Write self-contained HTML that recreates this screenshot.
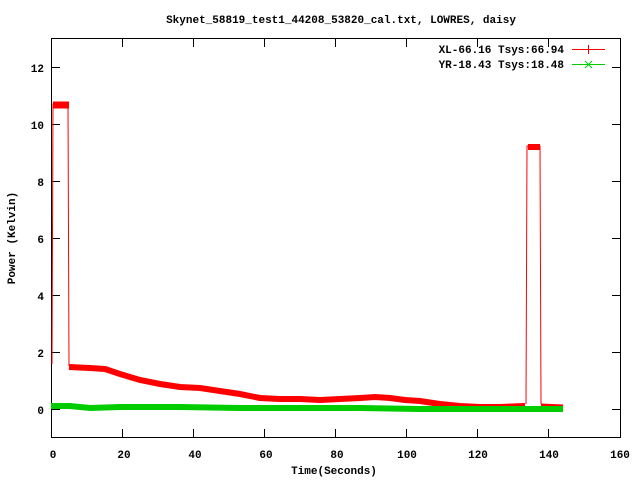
<!DOCTYPE html>
<html><head><style>body{margin:0;background:#fff}svg{display:block}text{font-family:"Liberation Mono",monospace;font-weight:bold;font-size:11px;fill:#000}</style></head><body>
<svg width="640" height="480" xmlns="http://www.w3.org/2000/svg">
<rect x="51.5" y="38.5" width="569" height="399" fill="none" stroke="#000"/>
<g stroke="#000">
<line x1="52" y1="67.5" x2="60" y2="67.5"/><line x1="612" y1="67.5" x2="620" y2="67.5"/>
<line x1="52" y1="124.5" x2="60" y2="124.5"/><line x1="612" y1="124.5" x2="620" y2="124.5"/>
<line x1="52" y1="181.5" x2="60" y2="181.5"/><line x1="612" y1="181.5" x2="620" y2="181.5"/>
<line x1="52" y1="238.5" x2="60" y2="238.5"/><line x1="612" y1="238.5" x2="620" y2="238.5"/>
<line x1="52" y1="295.5" x2="60" y2="295.5"/><line x1="612" y1="295.5" x2="620" y2="295.5"/>
<line x1="52" y1="352.5" x2="60" y2="352.5"/><line x1="612" y1="352.5" x2="620" y2="352.5"/>
<line x1="52" y1="409.5" x2="60" y2="409.5"/><line x1="612" y1="409.5" x2="620" y2="409.5"/>
<line x1="122.5" y1="437" x2="122.5" y2="429"/><line x1="122.5" y1="39" x2="122.5" y2="47"/>
<line x1="193.5" y1="437" x2="193.5" y2="429"/><line x1="193.5" y1="39" x2="193.5" y2="47"/>
<line x1="264.5" y1="437" x2="264.5" y2="429"/><line x1="264.5" y1="39" x2="264.5" y2="47"/>
<line x1="335.5" y1="437" x2="335.5" y2="429"/><line x1="335.5" y1="39" x2="335.5" y2="47"/>
<line x1="406.5" y1="437" x2="406.5" y2="429"/><line x1="406.5" y1="39" x2="406.5" y2="47"/>
<line x1="477.5" y1="437" x2="477.5" y2="429"/><line x1="477.5" y1="39" x2="477.5" y2="47"/>
<line x1="548.5" y1="437" x2="548.5" y2="429"/><line x1="548.5" y1="39" x2="548.5" y2="47"/>
</g>
<g text-anchor="end">
<text x="44" y="72">12</text><text x="44" y="129">10</text><text x="44" y="186">8</text><text x="44" y="243">6</text><text x="44" y="300">4</text><text x="44" y="357">2</text><text x="44" y="414">0</text>
</g>
<g text-anchor="middle">
<text x="53" y="458">0</text><text x="124" y="458">20</text><text x="195" y="458">40</text><text x="266" y="458">60</text><text x="337" y="458">80</text><text x="407" y="458">100</text><text x="478" y="458">120</text><text x="549" y="458">140</text><text x="620" y="458">160</text>
<text x="334" y="474">Time(Seconds)</text>
<text x="341" y="23">Skynet_58819_test1_44208_53820_cal.txt, LOWRES, daisy</text>
<text transform="translate(15,238) rotate(-90)">Power (Kelvin)</text>
</g>
<g text-anchor="end"><text x="564" y="53">XL-66.16 Tsys:66.94</text><text x="564" y="68">YR-18.43 Tsys:18.48</text></g>
<line x1="572" y1="49.5" x2="605" y2="49.5" stroke="#f00"/><line x1="588.5" y1="45" x2="588.5" y2="54" stroke="#f00"/>
<line x1="572" y1="64.5" x2="605" y2="64.5" stroke="#0c0"/><path d="M585 61l7 7M592 61l-7 7" stroke="#0c0"/>
<polyline fill="none" stroke="#f00" stroke-width="1" points="52,364 53,104 54,104 68,104 69,366"/>
<polyline fill="none" stroke="#f00" stroke-width="1" points="526,404 527,146 540,146 541,404"/>
<polyline fill="none" stroke="#f00" stroke-width="7" points="53,105 69,105"/>
<polyline fill="none" stroke="#f00" stroke-width="6" points="69,367 90,368 105,369 120,374 140,380 160,384 180,387 200,388 220,391 240,394 260,398 280,399 300,399 320,400 340,399 360,398 375,397 390,398 405,400 420,401 440,404 460,406 480,407 500,407 525,406"/>
<polyline fill="none" stroke="#f00" stroke-width="6" points="528,147 540,147"/>
<polyline fill="none" stroke="#f00" stroke-width="5" points="541,406 563,407"/>
<polyline fill="none" stroke="#0c0" stroke-width="6" points="51,406 70,406 90,408 120,407 180,407 240,408 300,408 360,408 420,409 480,409 540,409 563,409"/>
</svg>
</body></html>
